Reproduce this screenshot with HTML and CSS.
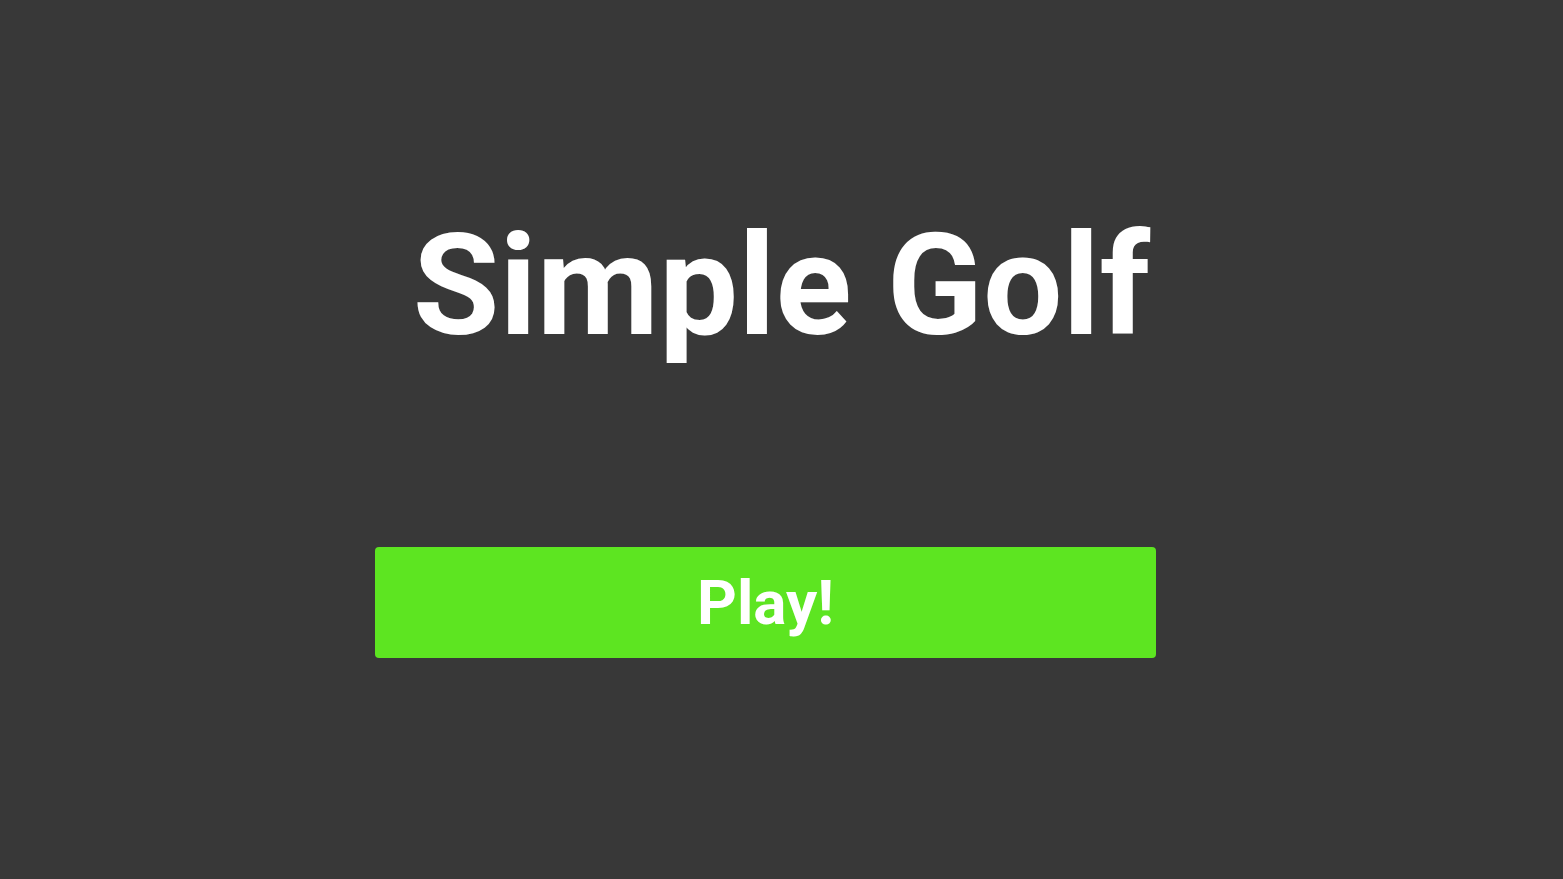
FILE: index.html
```html
<!DOCTYPE html>
<html>
<head>
<meta charset="utf-8">
<link rel="stylesheet" href="styles.css">
</head>
<body>
<main class="menu">
  <h1 class="title">Simple Golf</h1>
  <button class="play">Play!</button>
</main>
</body>
</html>
```
FILE: styles.css
```css
html, body {
  margin: 0;
  height: 100%;
  background: #383838;
}
.menu {
  height: 100%;
  display: flex;
  flex-direction: column;
  align-items: center;
  font-family: Roboto, "Liberation Sans", sans-serif;
}
.title {
  margin: 0;
  margin-top: 203px;
  font-size: 141px;
  line-height: 166px;
  font-weight: 700;
  color: #ffffff;
}
.play {
  margin-top: 178px;
  margin-right: 32px;
  width: 781px;
  height: 111px;
  border: none;
  border-radius: 4px;
  background: #5de521;
  color: #ffffff;
  font-family: Roboto, "Liberation Sans", sans-serif;
  font-weight: 700;
  font-size: 62px;
  line-height: 1;
  padding: 0;
  cursor: pointer;
}
```
